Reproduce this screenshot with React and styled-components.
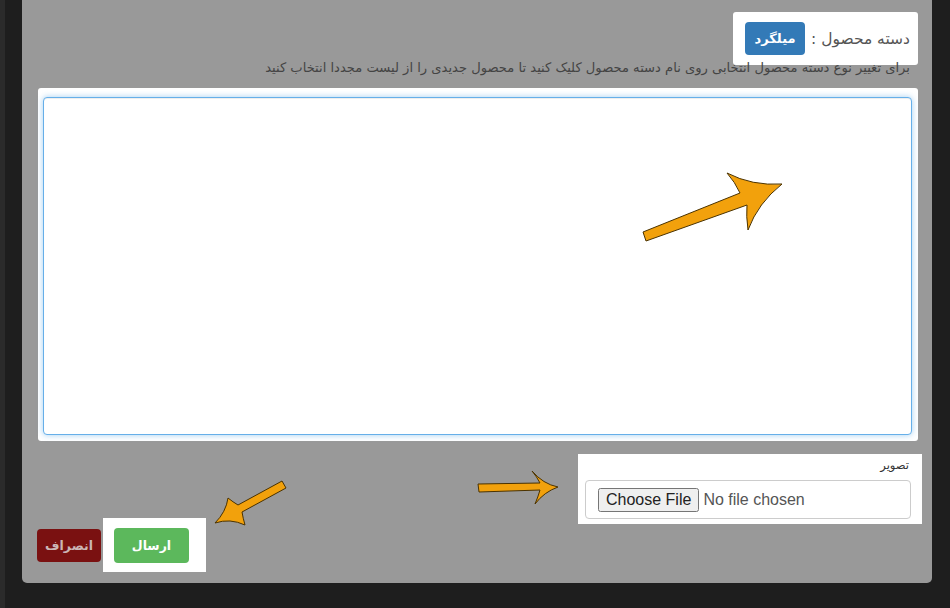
import React from "react";
import styled, { createGlobalStyle } from "styled-components";

const Global = createGlobalStyle`
  html, body { margin: 0; padding: 0; background: #1e1e1e; }
  body { font-family: Tahoma, "DejaVu Sans", sans-serif; }
  * { box-sizing: border-box; }
`;

const Page = styled.div`
  position: relative;
  display: flex;
  width: 950px;
  height: 608px;
  overflow: hidden;
  background: #1e1e1e;
`;

const EdgeStrip = styled.div`
  width: 5px;
  background: #2b2b2b;
`;

const Main = styled.div`
  flex: 1;
  padding: 0 18px 25px 17px;
`;

const Panel = styled.div`
  direction: rtl;
  height: 583px;
  background: #999999;
  border-radius: 0 0 5px 5px;
  display: flex;
  flex-direction: column;
  align-items: flex-start;
  padding-bottom: 11px;
  & > * { flex-shrink: 0; }
`;

const Highlight = styled.div`
  background: #ffffff;
  border-radius: 3px;
`;

const CategoryBox = styled(Highlight)`
  margin: 12px 14px 0 0;
  height: 53px;
  padding: 0 8px 0 12px;
  display: flex;
  align-items: center;
  gap: 6px;
`;

const CategoryLabel = styled.span`
  font-size: 15.5px;
  color: #555;
  font-family: "DejaVu Sans", sans-serif;
`;

const Btn = styled.button`
  border: none;
  border-radius: 4px;
  font-family: "DejaVu Sans", sans-serif;
  font-weight: bold;
  font-size: ${(p) => p.$fs || 13}px;
  color: ${(p) => p.$fg || "#fff"};
  background: ${(p) => p.$bg};
  width: ${(p) => p.$w}px;
  height: ${(p) => p.$h}px;
  padding: 0;
  cursor: pointer;
`;

const Hint = styled.p`
  margin: -6px 22px 0 0;
  font-size: 13.1px;
  line-height: 18px;
  color: #444;
  font-family: "DejaVu Sans", sans-serif;
  white-space: nowrap;
`;

const EditorBox = styled(Highlight)`
  align-self: stretch;
  margin: 11px 14px 0 16px;
  height: 353px;
  padding: 9px 6px 6px 5px;
  display: flex;
`;

const Editor = styled.textarea`
  flex: 1;
  resize: none;
  direction: rtl;
  border: 1px solid #66afe9;
  border-radius: 4px;
  outline: none;
  padding: 5px 13px;
  font-size: 18px;
  line-height: 26px;
  font-family: "DejaVu Sans", sans-serif;
  color: #333;
  caret-color: #333;
  box-shadow: inset 0 1px 1px rgba(0, 0, 0, 0.075), 0 0 6px rgba(102, 175, 233, 0.6);
`;

const FileBox = styled(Highlight)`
  margin: 13px 10px 0 0;
  width: 344px;
  height: 70px;
  padding: 4px 11px 5px 7px;
  display: flex;
  flex-direction: column;
  border-radius: 0;
`;

const FileLabel = styled.label`
  font-size: 11.5px;
  font-weight: normal;
  color: #333;
  line-height: 14px;
  font-family: "DejaVu Sans", sans-serif;
  margin: 0 2px 8px 0;
`;

const FileInput = styled.input`
  direction: ltr;
  width: 100%;
  height: 39px;
  border: 1px solid #cccccc;
  border-radius: 4px;
  padding: 7px 12px;
  font-family: "Liberation Sans", Arial, sans-serif;
  font-size: 16px;
  color: #555;
  background: #fff;
  &::file-selector-button {
    font-family: "Liberation Sans", Arial, sans-serif;
    font-size: 16px;
    color: #222;
    margin-right: 4px;
  }
`;

const Actions = styled.div`
  margin: -6px 0 0 0;
  align-self: flex-end;
  padding-left: 15px;
  display: flex;
  align-items: center;
  gap: 2px;
`;

const SubmitBox = styled(Highlight)`
  border-radius: 0;
  padding: 10px 17px 9px 11px;
`;

const Overlay = styled.svg`
  position: absolute;
  left: 0;
  top: 0;
  pointer-events: none;
`;

const Arrow = styled.path`
  fill: #f2a10c;
  stroke: #4a3200;
  stroke-width: 1;
  stroke-linejoin: round;
`;

export default function App() {
  return (
    <Page>
      <Global />
      <EdgeStrip />
      <Main>
        <Panel>
          <CategoryBox>
            <CategoryLabel>دسته محصول :</CategoryLabel>
            <Btn $bg="#337ab7" $w={60} $h={33} $fs={13}>میلگرد</Btn>
          </CategoryBox>
          <Hint>
            برای تغییر نوع دسته محصول انتخابی روی نام دسته محصول کلیک کنید تا محصول جدیدی را از لیست مجددا انتخاب کنید
          </Hint>
          <EditorBox>
            <Editor autoFocus />
          </EditorBox>
          <FileBox>
            <FileLabel>تصویر</FileLabel>
            <FileInput type="file" />
          </FileBox>
          <Actions>
            <SubmitBox>
              <Btn $bg="#5cb85c" $w={75} $h={35} $fs={12.5}>ارسال</Btn>
            </SubmitBox>
            <Btn $bg="#7a1111" $fg="#cbb5b5" $w={64} $h={33} $fs={12.5}>انصراف</Btn>
          </Actions>
        </Panel>
      </Main>
      <Overlay width="950" height="608" viewBox="0 0 950 608">
        <Arrow d="M643,232 L740,193 Q735,182 727,173 Q752,186 782,184 Q758,203 748,230 Q746,216 747,205 L646,241 Z" />
        <Arrow d="M478,484 L540,483 Q537,477 532,471 Q543,484 558,487 Q544,492 535,504 Q538,497 540,490 L479,492 Z" />
        <Arrow d="M282,481 L238,505 Q233,502 228,498 Q226,512 215,523 Q230,518 245,525 Q243,518 242,512 L286,488 Z" />
      </Overlay>
    </Page>
  );
}
